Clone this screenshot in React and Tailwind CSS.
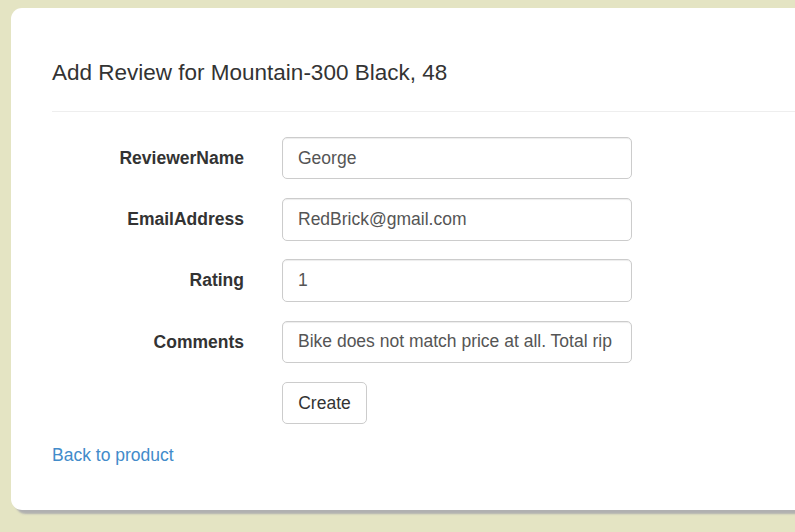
export default function App() {
  const rows = [
    { label: "ReviewerName", value: "George" },
    { label: "EmailAddress", value: "RedBrick@gmail.com" },
    { label: "Rating", value: "1" },
    { label: "Comments", value: "Bike does not match price at all. Total rip" },
  ];
  return (
    <div
      className="min-h-screen w-full overflow-hidden bg-[#e4e4c3] pt-[8px] pl-[11px] pb-[20px]"
      style={{ fontFamily: '"Liberation Sans", Arial, sans-serif' }}
    >
      <div className="w-[820px] rounded-[11px] bg-white pt-[53px] pb-[42px] pl-[41px] shadow-[4px_4px_2px_#b0b0b0]">
        <h4 className="text-[22.5px] leading-[24.75px] text-[#333] font-normal">
          Add Review for Mountain-300 Black, 48
        </h4>
        <div className="mt-[25px] h-px bg-[#eeeeee]" />
        <div className="mt-[25px] flex flex-col">
          {rows.map((r) => (
            <div key={r.label} className="flex items-center mb-[18.75px]">
              <label className="w-[192px] text-right font-bold text-[17.5px] text-[#333]">
                {r.label}
              </label>
              <input
                readOnly
                value={r.value}
                className="ml-[38px] h-[42.5px] w-[350px] rounded-[5px] border border-[#cccccc] bg-white px-[15px] text-[17.5px] text-[#555] shadow-[inset_0_1px_1px_rgba(0,0,0,0.075)] outline-none"
              />
            </div>
          ))}
          <div className="flex">
            <div className="w-[192px]" />
            <button className="ml-[38px] h-[42.5px] w-[85px] rounded-[5px] border border-[#cccccc] bg-white text-[17.5px] text-[#333]">
              Create
            </button>
          </div>
        </div>
        <div className="mt-[19px]">
          <a href="#" className="text-[17.5px] leading-[25px] text-[#428bca]">
            Back to product
          </a>
        </div>
      </div>
    </div>
  );
}
